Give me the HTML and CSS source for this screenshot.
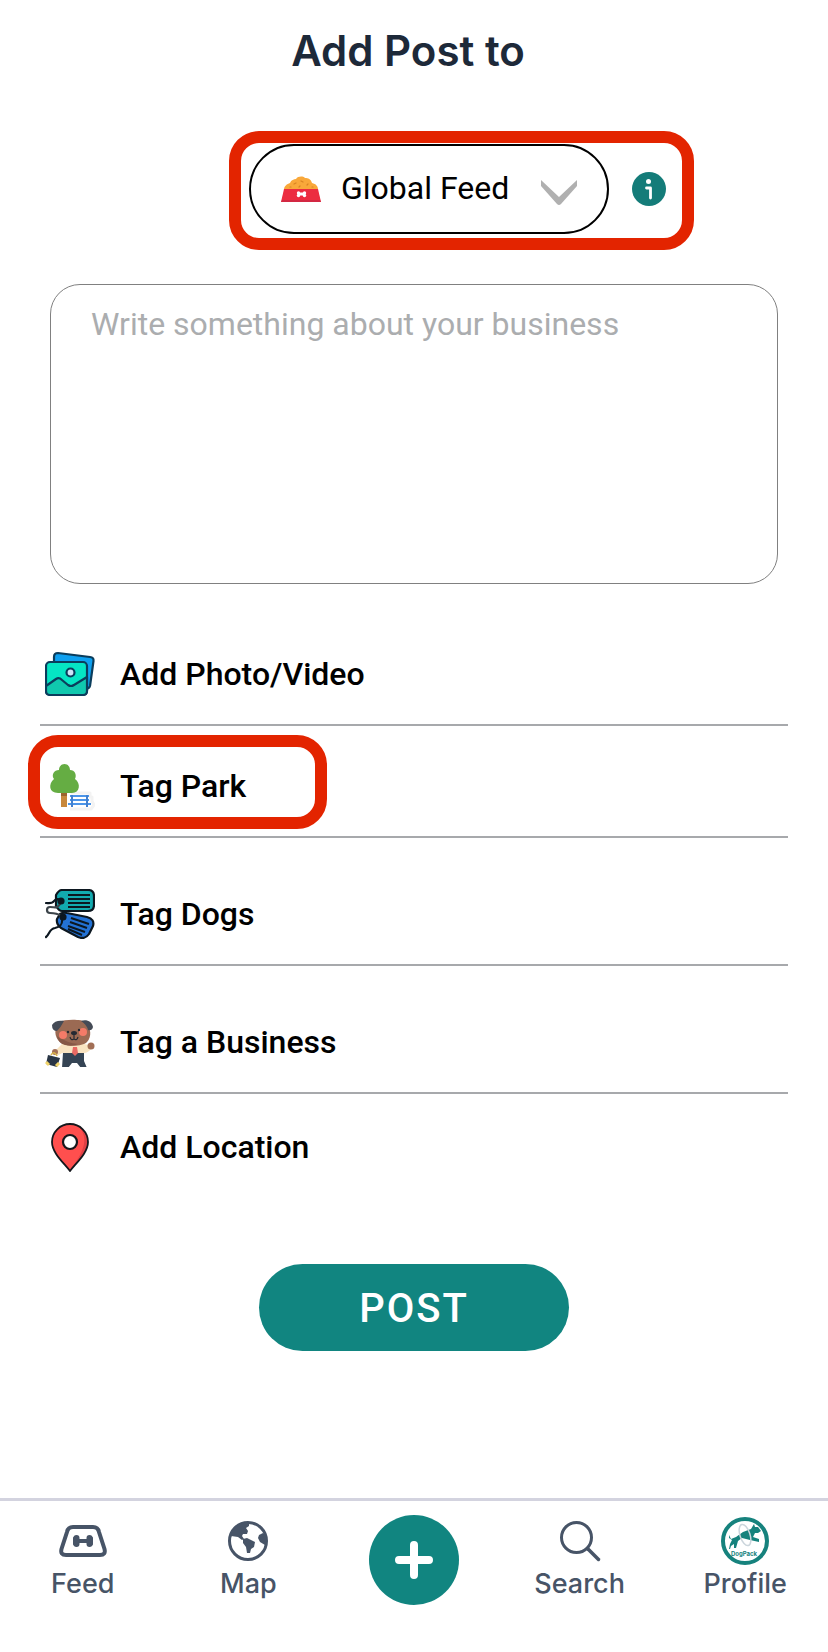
FILE: index.html
```html
<!DOCTYPE html>
<html lang="en">
<head>
<meta charset="utf-8">
<meta name="viewport" content="width=device-width, initial-scale=1">
<title>Add Post</title>
<link rel="stylesheet" href="styles.css">
</head>
<body>
<main class="page">
  <h1 class="title">Add Post to</h1>

  <div class="audience">
    <div class="audience-frame">
      <div class="feed-picker">
        <svg class="bowl" viewBox="0 0 40 26" aria-hidden="true">
          <path d="M3 14C3 10 6 8 9 7C10 4 13 3 15 3C17 0 22 0 24 2C27 2 30 3 31 7C35 8 37 10 37 14Z" fill="#f9a83a"/>
          <path d="M13 8l2-1M20 5l2 1M26 9l1-1M18 11l1-1M9 11l1 0M31 11l1 0" stroke="#d98324" stroke-width="1.2" stroke-linecap="round"/>
          <path d="M3 13H37L40 26H0Z" fill="#ec2d40"/>
          <path d="M1 24H39L40 26H0Z" fill="#d32843"/>
          <path d="M18 18h5" stroke="#fff" stroke-width="3"/>
          <g fill="#fff"><circle cx="17.500" cy="17" r="1.700"/><circle cx="17.500" cy="19.500" r="1.700"/><circle cx="23.500" cy="17" r="1.700"/><circle cx="23.500" cy="19.500" r="1.700"/></g>
        </svg>
        <select class="feed-select" aria-label="Feed">
          <option>Global Feed</option>
        </select>
        <svg class="chevron" viewBox="0 0 36 25" aria-hidden="true"><path d="M0 0L18 17L36 0V6L20 24Q18 26 16 24L0 6Z" fill="#b0b0b0"/></svg>
      </div>
      <button class="info" type="button" aria-label="About feeds">
        <svg viewBox="0 0 34 34" aria-hidden="true"><circle cx="17" cy="17" r="17" fill="#147c79"/><circle cx="16.500" cy="9.500" r="2.500" fill="#fff"/><path d="M14.500 16H18.500V26" fill="none" stroke="#fff" stroke-width="2.800" stroke-linecap="round" stroke-linejoin="round"/></svg>
      </button>
    </div>
  </div>

  <textarea class="message" aria-label="Post text" placeholder="Write something about your business"></textarea>

  <div class="actions">
    <button class="action" type="button">
      <svg class="action-icon" viewBox="0 0 50 50" aria-hidden="true">
        <g stroke="#0b3d5c" stroke-width="2.200" stroke-linejoin="round">
          <path d="M9 14V8Q9 4 13 4L45 8Q49 8.500 48.500 12L45 37Q44 40 41 40L38 39Z" fill="#0ea0f0"/>
          <rect x="1" y="13" width="41" height="33" rx="4" fill="#05e5c4"/>
          <path d="M1 37L11 30Q14 28 17 31L23 36Q26 38 29 36L42 28V42Q42 46 38 46H5Q1 46 1 42Z" fill="#10c8ae"/>
          <circle cx="25.500" cy="23.500" r="4" fill="#cde4f7"/>
        </g>
      </svg>
      <span>Add Photo/Video</span>
    </button>
    <button class="action action-park" type="button">
      <svg class="action-icon" viewBox="0 0 50 50" aria-hidden="true">
        <path d="M26 32H45V36H47V40L49 44L46 48H25" fill="none" stroke="#f3f3f3" stroke-width="3" stroke-linejoin="round"/>
        <path d="M16 30H22V46H16Z" fill="#c8883c"/>
        <path d="M16 31H22V35H16Z" fill="#9b632c"/>
        <path d="M19.500 3C23 3 25 6 25 9C30 9 32 14 30 18C36 22 35 32 27 32H13C4 32 3 23 9 18C6 14 9 9 14 9C14 6 16 3 19.500 3Z" fill="#65ad43"/>
        <g stroke="#4c95e9" stroke-width="2"><path d="M25 35H44M25 39H44M23 43H46"/></g><g stroke="#4180cf" stroke-width="2"><path d="M27 34V46M42 34V46"/></g>
      </svg>
      <span>Tag Park</span>
      <span class="park-frame" aria-hidden="true"></span>
    </button>
    <button class="action action-tall" type="button">
      <svg class="action-icon" viewBox="0 0 50 50" aria-hidden="true">
        <g stroke="#0c1720" stroke-width="2.200" stroke-linejoin="round">
          <path d="M17 1H43Q49 1 49 7V16Q49 22 43 22H17Q14 22 11 17V6Q14 1 17 1Z" fill="#12aaaf"/>
          <path d="M22 24L42 28Q50 30 48 37L44 45Q40 51 33 48L16 39Q11 35 12 30L15 25Q18 23 22 24Z" fill="#2372d5"/>
          <path d="M23 6H45M23 10H45M23 14H45M23 18H45" stroke-width="2"/>
          <path d="M26 29L44 35M25 33L42 39M23 37L40 43M23 40L37 46" stroke-width="2"/>
          <path d="M16 12C13 9 11 10 9 12C7 15 4 14 1 14" fill="none" stroke-linecap="round"/>
          <path d="M16 27C12 24 8 24 5 24C1 24 1 18 5 18C10 18 12 20 15 15" fill="none" stroke-linecap="round" stroke="#3c444a"/>
          <path d="M17 29C18 36 15 38 10 39C4 40 5 45 1 48" fill="none" stroke-linecap="round"/>
          <circle cx="16" cy="12" r="2.500" fill="#0c1720"/><circle cx="18" cy="28" r="2.500" fill="#0c1720"/>
        </g>
      </svg>
      <span>Tag Dogs</span>
    </button>
    <button class="action action-tall" type="button">
      <svg class="action-icon" viewBox="0 0 50 50" aria-hidden="true">
        <path d="M9 35L17 27H39L44 28L47 31Q43 36 39 36H17L12 39Z" fill="#f9e4c1"/>
        <circle cx="46" cy="29" r="3.500" fill="#a26f56"/>
        <circle cx="10" cy="35" r="3" fill="#a26f56"/>
        <path d="M18 36H39V44L42 51H36L32 46H27L23 51H17Z" fill="#354454"/>
        <path d="M3 38L15 41L12 50L1 47Z" fill="#293545"/>
        <path d="M6 38Q9 33 12 39" fill="none" stroke="#d9b44c" stroke-width="1.500"/>
        <path d="M1 45L4 48M11 49L14 46" stroke="#f0d36a" stroke-width="3"/>
        <path d="M14 5C20 2 36 2 41 5C46 11 47 20 42 25C37 30 20 30 15 25C9 20 9 11 14 5Z" fill="#9b6a53"/>
        <path d="M12 19Q22 26 33 27Q27 30 20 28Q13 26 12 19Z" fill="#865846"/>
        <path d="M19 4C14 3 9 4 7 8Q7 14 12 14Q16 10 19 4ZM36 4C42 2 47 5 48 10Q47 14 43 13Q42 8 36 4Z" fill="#454b56"/>
        <circle cx="18" cy="18" r="4" fill="#f47b68"/><circle cx="38" cy="15" r="4" fill="#f47b68"/>
        <circle cx="23" cy="15" r="1.200" fill="#252932"/><circle cx="34" cy="13" r="1.200" fill="#252932"/>
        <ellipse cx="29" cy="16" rx="3" ry="2" fill="#252932"/>
        <path d="M29 17V22M25 20Q26 24 29 22Q32 24 33 20" fill="none" stroke="#252932" stroke-width="1.200"/>
        <path d="M28 30H32L33 36L30 39L27 36Z" fill="#e96a63"/>
      </svg>
      <span>Tag a Business</span>
    </button>
    <button class="action action-last" type="button">
      <svg class="action-icon" viewBox="0 0 50 50" aria-hidden="true"><path d="M25 49C19 41 7 31 7 20A18 18 0 0 1 43 20C43 31 31 41 25 49Z" fill="#ff4f4e"/><path d="M34 5C43 15 41 27 26 47C35 37 43 29 43 20Q42 9 34 5Z" fill="#df4045"/><path d="M25 49C19 41 7 31 7 20A18 18 0 0 1 43 20C43 31 31 41 25 49Z" fill="none" stroke="#15171c" stroke-width="1.800"/><circle cx="25" cy="20" r="7" fill="#fff" stroke="#15171c" stroke-width="2.200"/></svg>
      <span>Add Location</span>
    </button>
  </div>

  <button class="submit" type="button">POST</button>

  <nav class="tabs" aria-label="Main">
    <a class="tab" href="#feed">
      <svg class="tab-icon" viewBox="0 0 48 48" aria-hidden="true">
        <path d="M14 10H34Q39 10 40 15L45.500 32Q47 38 41 38H7Q1 38 2.500 32L8 15Q9 10 14 10Z" fill="none" stroke="#475467" stroke-width="4"/>
        <path d="M18 24H30" stroke="#475467" stroke-width="4"/><path d="M17.500 21V27M30.500 21V27" stroke="#475467" stroke-width="6" stroke-linecap="round"/><path d="M15.500 21V27M32.500 21V27" stroke="#475467" stroke-width="3" stroke-linecap="round"/>
      </svg>
      <span>Feed</span>
    </a>
    <a class="tab" href="#map">
      <svg class="tab-icon" viewBox="0 0 48 48" aria-hidden="true">
        <circle cx="24" cy="24" r="18.500" fill="none" stroke="#475467" stroke-width="3"/>
        <path d="M7 18C9 12 14 7 20 5L25 6L25 9L22 11L24 14L23 17L19 17L18 19L20 22L18 23L14 20L7 19Z" fill="#475467"/>
        <path d="M19 22L23 21L31 25L30 30L27 32L26 36L23 36L22 30L19 26Z" fill="#475467"/>
        <path d="M35 18L39 16L42 18L43 26L41 28L36 25L34 21Z" fill="#475467"/>
      </svg>
      <span>Map</span>
    </a>
    <a class="tab" href="#new" aria-label="New post">
      <svg class="tab-add" viewBox="0 0 90 90" aria-hidden="true"><circle cx="45" cy="45" r="45" fill="#118580"/><path d="M45 30V60M30 45H60" stroke="#fff" stroke-width="8" stroke-linecap="round"/></svg>
    </a>
    <a class="tab" href="#search">
      <svg class="tab-icon" viewBox="0 0 48 48" aria-hidden="true"><circle cx="20.500" cy="20.500" r="15" fill="none" stroke="#475467" stroke-width="3"/><path d="M32 32L42.500 42.500" stroke="#475467" stroke-width="3.500" stroke-linecap="round"/></svg>
      <span>Search</span>
    </a>
    <a class="tab" href="#profile">
      <svg class="tab-icon" viewBox="0 0 48 48" aria-hidden="true">
        <circle cx="24" cy="24" r="22" fill="#fff" stroke="#16827d" stroke-width="4"/>
        <path d="M8 18L10 22L15 20L22 15L30 12L33 7L34 10L37 10L40 14L37 16L34 16L32 20L38 22L38 25L29 23L21 21L17 24L15 31H13L13 27L10 29L9 32H8L9 27L11 23L8 21Z" fill="#16827d"/>
        <ellipse cx="24" cy="18" rx="5" ry="11" transform="rotate(-18 24 18)" fill="none" stroke="#cbd5dc" stroke-width="1.500"/>
        <text class="logo-text" x="23" y="39" text-anchor="middle">DogPack</text>
      </svg>
      <span>Profile</span>
    </a>
  </nav>
</main>
</body>
</html>
```
FILE: styles.css
```css
* {
  box-sizing: border-box;
}

body {
  margin: 0;
  background: #fff;
  color: #000;
  font-family: Roboto, "Liberation Sans", sans-serif;
}

button {
  padding: 0;
  border: 0;
  background: none;
  color: inherit;
  font: inherit;
}

svg {
  display: block;
  flex: none;
}

.page {
  display: flex;
  flex-direction: column;
  min-height: 100vh;
}

.title {
  margin: 27px 12px 0 0;
  color: #1d2939;
  font: 600 42px/48px Inter, sans-serif;
  text-align: center;
}

.audience {
  display: flex;
  justify-content: center;
  margin-top: 56px;
  padding-left: 95px;
}

.audience-frame {
  display: flex;
  align-items: center;
  gap: 23px;
  padding: 1px 16px 4px 8px;
  border: 12px solid #e32400;
  border-radius: 30px;
}

.feed-picker {
  display: flex;
  align-items: center;
  width: 360px;
  height: 90px;
  padding: 0 30px;
  border: 2px solid #000;
  border-radius: 45px;
}

.bowl {
  width: 40px;
  height: 26px;
}

.feed-select {
  flex: 1;
  min-width: 0;
  height: 48px;
  margin: 0 20px 2px;
  padding: 0;
  border: 0;
  background: none;
  color: #000;
  font: 400 32px/48px Roboto, sans-serif;
  appearance: none;
}

.chevron {
  width: 36px;
  height: 25px;
  margin-top: 6px;
}

.info,
.info svg {
  width: 34px;
  height: 34px;
}

.message {
  display: block;
  height: 300px;
  margin: 34px 50px 0;
  padding: 19px 40px;
  border: 1px solid #808080;
  border-radius: 30px;
  background: none;
  font: 400 32px/40px Roboto, sans-serif;
  resize: none;
}

.message::placeholder {
  color: #abadaf;
  opacity: 1;
}

.actions {
  display: flex;
  flex-direction: column;
  margin: 65px 40px 0;
}

.action {
  position: relative;
  display: flex;
  align-items: center;
  gap: 25px;
  padding: 0 5px 25px;
  border-bottom: 2px solid #a7a9ac;
  font-size: 32px;
  font-weight: 500;
  line-height: 48px;
  text-align: left;
}

.action-icon {
  width: 50px;
  height: 50px;
}

.action-park {
  padding-top: 35px;
}

.action-tall {
  padding-top: 51px;
}

.action-last {
  padding-top: 28px;
  border-bottom: 0;
}

.park-frame {
  position: absolute;
  top: 9px;
  left: -12px;
  width: 299px;
  height: 94px;
  border: 12px solid #e32400;
  border-radius: 30px;
}

.submit {
  align-self: center;
  width: 310px;
  height: 87px;
  margin: 67px 0 40px;
  padding-top: 2px;
  border-radius: 44px;
  background: #118580;
  color: #fff;
  font-size: 40px;
  font-weight: 500;
  letter-spacing: 2px;
}

.tabs {
  display: grid;
  grid-template-columns: repeat(5, 1fr);
  height: 154px;
  margin-top: auto;
  padding-top: 14px;
  border-top: 3px solid #d3d3df;
}

.tab {
  display: flex;
  flex-direction: column;
  align-items: center;
  padding-top: 2px;
  color: #475467;
  font: 500 27px/38px Inter, sans-serif;
  text-decoration: none;
}

.tab-icon {
  width: 48px;
  height: 48px;
}

.tab-add {
  width: 90px;
  height: 90px;
  margin-top: -2px;
}

.logo-text {
  fill: #16827d;
  font: 700 6px Inter, sans-serif;
}
```
